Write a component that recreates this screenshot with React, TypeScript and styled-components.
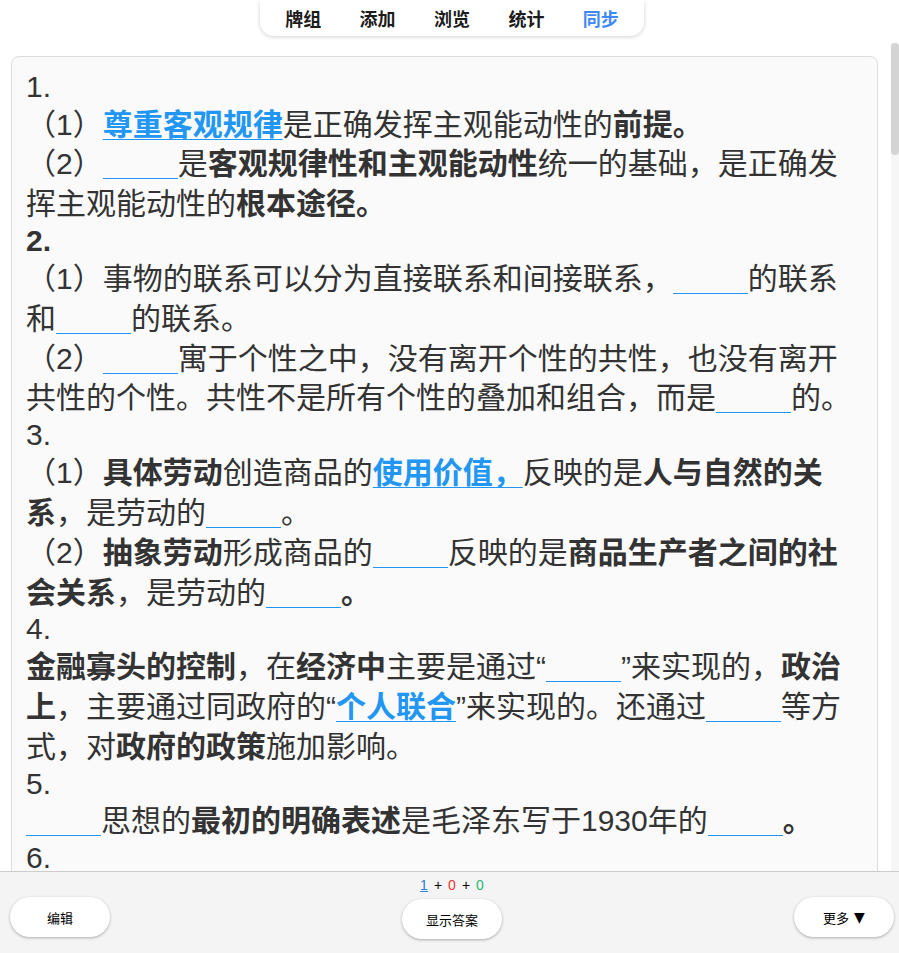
import React from 'react';
import styled, { createGlobalStyle } from 'styled-components';

const GlobalStyle = createGlobalStyle`
  html, body {
    margin: 0;
    padding: 0;
    background: #ffffff;
  }
  body {
    font-family: "Liberation Sans", "Noto Sans CJK SC", sans-serif;
  }
`;

const Page = styled.div`
  display: flex;
  flex-direction: column;
  height: 100vh;
  width: 100%;
  overflow: hidden;
  background: #ffffff;
`;

const TopArea = styled.div`
  flex-shrink: 0;
  height: 43px;
  display: flex;
  justify-content: center;
  padding-left: 5px;
  box-sizing: border-box;
`;

const NavPill = styled.nav`
  width: 384px;
  height: 36px;
  box-sizing: border-box;
  padding: 0 6px;
  display: flex;
  background: #ffffff;
  border-radius: 0 0 14px 14px;
  box-shadow: 0 1px 4px rgba(0, 0, 0, 0.18);
`;

const NavItem = styled.div<{ $active?: boolean }>`
  flex: 1;
  display: flex;
  align-items: center;
  justify-content: center;
  font-family: "Noto Sans CJK SC", sans-serif;
  font-weight: 700;
  font-size: 18px;
  color: ${(p) => (p.$active ? '#4088f5' : '#1c1c1c')};
`;

const Middle = styled.div`
  flex: 1;
  min-height: 0;
  display: flex;
`;

const Scroller = styled.div`
  flex: 1;
  min-width: 0;
  overflow-y: auto;
  scrollbar-width: none;
  &::-webkit-scrollbar {
    display: none;
  }
`;

const ScrollTrack = styled.div`
  flex-shrink: 0;
  width: 8px;
  background: #f6f6f6;
`;

const ScrollThumb = styled.div`
  height: 112px;
  background: #d4d4d4;
  border-radius: 4px;
`;

const Card = styled.div`
  margin: 13px 13px 13px 11px;
  border: 1px solid #dddddd;
  border-radius: 8px;
  background: #fafafa;
  padding: 13px 25px 13px 14px;
  color: #333333;
  font-size: 30px;
  font-family: "Liberation Sans", "Noto Sans CJK SC", sans-serif;
`;

const Label = styled.div<{ $bold?: boolean }>`
  line-height: 34.5px;
  font-weight: ${(p) => (p.$bold ? 700 : 400)};
`;

const Para = styled.div`
  line-height: 39.9px;
`;

const B = styled.strong`
  font-weight: 700;
`;

const Link = styled.span`
  color: #2196f3;
  font-weight: 700;
  text-decoration: underline;
  text-decoration-thickness: 1px;
  text-underline-offset: 4px;
`;

const Blank = styled.span`
  display: inline-block;
  width: 75px;
  height: 1px;
  border-bottom: 1px solid #2196f3;
  vertical-align: -5px;
`;

const BottomBar = styled.div`
  flex-shrink: 0;
  height: 82px;
  box-sizing: border-box;
  border-top: 1px solid #cccccc;
  background: #f4f4f4;
  display: grid;
  grid-template-columns: 1fr auto 1fr;
  align-items: start;
  padding: 5px 5px 0 10px;
`;

const Side = styled.div<{ $end?: boolean }>`
  display: flex;
  justify-content: ${(p) => (p.$end ? 'flex-end' : 'flex-start')};
  padding-top: 20px;
`;

const CenterStack = styled.div`
  display: flex;
  flex-direction: column;
  align-items: center;
  gap: 6px;
`;

const Counter = styled.div`
  display: flex;
  align-items: baseline;
  font-family: "Liberation Sans", sans-serif;
  font-size: 14px;
  line-height: 16px;
  color: #000000;
`;

const Count = styled.span<{ $c: string; $u?: boolean }>`
  color: ${(p) => p.$c};
  text-decoration: ${(p) => (p.$u ? 'underline' : 'none')};
`;

const Plus = styled.span`
  margin: 0 6px;
`;

const PillButton = styled.button`
  width: 100px;
  height: 40px;
  border: none;
  border-radius: 20px;
  background: #ffffff;
  box-shadow: 0 1px 3px rgba(0, 0, 0, 0.3);
  font-family: "Noto Sans CJK SC", sans-serif;
  font-size: 13px;
  color: #000000;
  padding: 0;
  cursor: pointer;
  display: inline-flex;
  align-items: center;
  justify-content: center;
  gap: 5px;
`;

const Caret = styled.span`
  font-family: "DejaVu Sans", sans-serif;
  font-size: 14px;
  line-height: 1;
`;

export default function App() {
  return (
    <>
      <GlobalStyle />
      <Page>
        <TopArea>
          <NavPill>
            <NavItem>牌组</NavItem>
            <NavItem>添加</NavItem>
            <NavItem>浏览</NavItem>
            <NavItem>统计</NavItem>
            <NavItem $active>同步</NavItem>
          </NavPill>
        </TopArea>
        <Middle>
          <Scroller>
            <Card>
              <Label>1.</Label>
              <Para>
                （1）<Link>尊重客观规律</Link>是正确发挥主观能动性的<B>前提。</B>
              </Para>
              <Para>
                （2）<Blank />是<B>客观规律性和主观能动性</B>统一的基础，是正确发挥主观能动性的<B>根本途径。</B>
              </Para>
              <Label $bold>2.</Label>
              <Para>
                （1）事物的联系可以分为直接联系和间接联系，<Blank />的联系和<Blank />的联系。
              </Para>
              <Para>
                （2）<Blank />寓于个性之中，没有离开个性的共性，也没有离开共性的个性。共性不是所有个性的叠加和组合，而是<Blank />的。
              </Para>
              <Label>3.</Label>
              <Para>
                （1）<B>具体劳动</B>创造商品的<Link>使用价值，</Link>反映的是<B>人与自然的关系</B>，是劳动的<Blank />。
              </Para>
              <Para>
                （2）<B>抽象劳动</B>形成商品的<Blank />反映的是<B>商品生产者之间的社会关系</B>，是劳动的<Blank /><B>。</B>
              </Para>
              <Label>4.</Label>
              <Para>
                <B>金融寡头的控制</B>，在<B>经济中</B>主要是通过“<Blank />”来实现的，<B>政治上</B>，主要通过同政府的“<Link>个人联合</Link>”来实现的。还通过<Blank />等方式，对<B>政府的政策</B>施加影响。
              </Para>
              <Label>5.</Label>
              <Para>
                <Blank />思想的<B>最初的明确表述</B>是毛泽东写于1930年的<Blank /><B>。</B>
              </Para>
              <Label>6.</Label>
            </Card>
          </Scroller>
          <ScrollTrack>
            <ScrollThumb />
          </ScrollTrack>
        </Middle>
        <BottomBar>
          <Side>
            <PillButton>编辑</PillButton>
          </Side>
          <CenterStack>
            <Counter>
              <Count $c="#2a7de1" $u>1</Count>
              <Plus>+</Plus>
              <Count $c="#e53935">0</Count>
              <Plus>+</Plus>
              <Count $c="#2bb673">0</Count>
            </Counter>
            <PillButton>显示答案</PillButton>
          </CenterStack>
          <Side $end>
            <PillButton>
              更多<Caret>▼</Caret>
            </PillButton>
          </Side>
        </BottomBar>
      </Page>
    </>
  );
}
